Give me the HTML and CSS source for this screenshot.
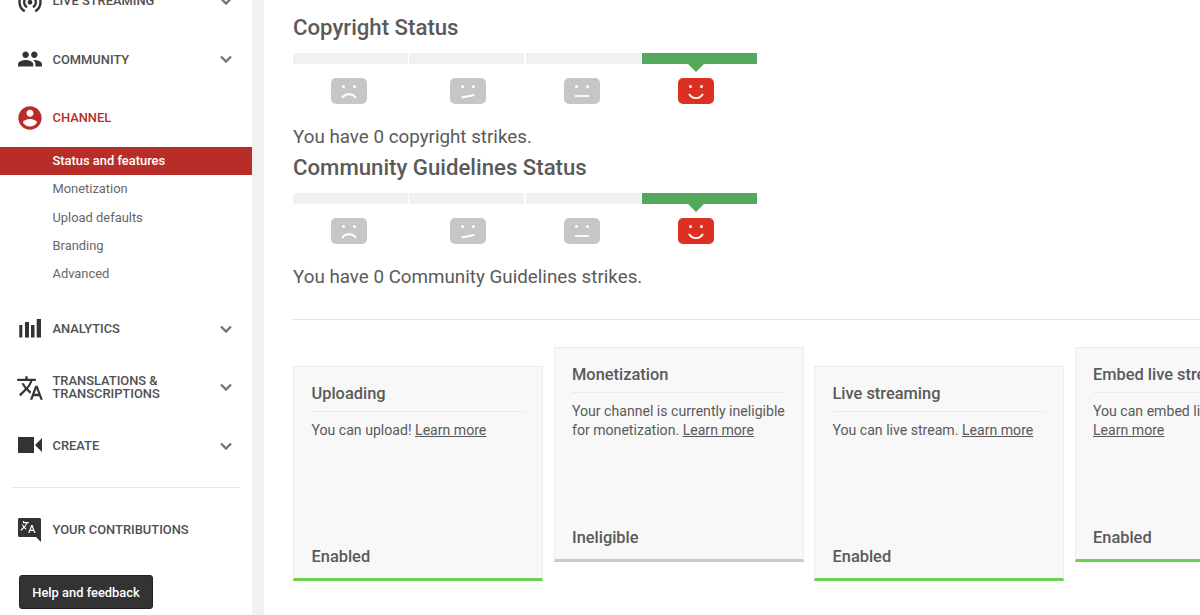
FILE: index.html
```html
<!DOCTYPE html>
<html lang="en">
<head>
    <meta charset="UTF-8">
    <title>Status and features</title>
    <link rel="stylesheet" href="styles.css">
</head>
<body>
    <div class="sidebar">
        <div class="nav-row">
            <svg class="nav-icon" viewBox="0 0 24 24"><path d="M12 11c-1.1 0-2 .9-2 2s.9 2 2 2 2-.9 2-2-.9-2-2-2zm6 2c0-3.31-2.69-6-6-6s-6 2.69-6 6c0 2.22 1.21 4.15 3 5.19l1-1.74c-1.19-.7-2-1.97-2-3.45 0-2.21 1.79-4 4-4s4 1.79 4 4c0 1.48-.81 2.75-2 3.45l1 1.74c1.79-1.04 3-2.97 3-5.19zM12 3C6.48 3 2 7.48 2 13c0 3.7 2.01 6.92 4.99 8.65l1-1.73C5.61 18.53 4 15.96 4 13c0-4.42 3.58-8 8-8s8 3.58 8 8c0 2.96-1.61 5.53-4 6.92l1 1.73c2.99-1.73 5-4.95 5-8.65 0-5.52-4.48-10-10-10z"/></svg>
            <span class="nav-label">LIVE STREAMING</span>
            <svg class="chevron" viewBox="0 0 12 8"><path d="M1 1.5l5 5 5-5"/></svg>
        </div>
        <div class="nav-row">
            <svg class="nav-icon people" viewBox="0 0 24 24"><path d="M16 11c1.66 0 2.99-1.34 2.99-3S17.66 5 16 5c-1.66 0-3 1.34-3 3s1.34 3 3 3zm-8 0c1.66 0 2.99-1.34 2.99-3S9.66 5 8 5C6.34 5 5 6.34 5 8s1.34 3 3 3zm0 2c-2.33 0-7 1.17-7 3.5V19h14v-2.5c0-2.33-4.67-3.5-7-3.5zm8 0c-.29 0-.62.02-.97.05 1.16.84 1.97 1.97 1.97 3.45V19h6v-2.5c0-2.33-4.67-3.5-7-3.5z"/></svg>
            <span class="nav-label">COMMUNITY</span>
            <svg class="chevron" viewBox="0 0 12 8"><path d="M1 1.5l5 5 5-5"/></svg>
        </div>
        <div class="nav-row active">
            <svg class="nav-icon" viewBox="0 0 24 24"><path d="M12 2C6.48 2 2 6.48 2 12s4.48 10 10 10 10-4.48 10-10S17.52 2 12 2zm0 3c1.66 0 3 1.34 3 3s-1.34 3-3 3-3-1.34-3-3 1.34-3 3-3zm0 14.2c-2.5 0-4.71-1.28-6-3.22.03-1.99 4-3.08 6-3.08 1.99 0 5.97 1.09 6 3.08-1.29 1.94-3.5 3.22-6 3.22z"/></svg>
            <span class="nav-label">CHANNEL</span>
        </div>
        <ul class="subnav">
            <li class="current">Status and features</li>
            <li>Monetization</li>
            <li>Upload defaults</li>
            <li>Branding</li>
            <li>Advanced</li>
        </ul>
        <div class="nav-row analytics">
            <svg class="nav-icon" viewBox="0 0 28 28"><path d="M3.3 10h3v12.5h-3zM9 7h4v15.5H9zM15 10h3.5v12.5H15zM20.7 4H25v18.5h-4.3z"/></svg>
            <span class="nav-label">ANALYTICS</span>
            <svg class="chevron" viewBox="0 0 12 8"><path d="M1 1.5l5 5 5-5"/></svg>
        </div>
        <div class="nav-row translations">
            <svg class="nav-icon" viewBox="0 0 24 24"><path d="M12.87 15.07l-2.54-2.51.03-.03c1.74-1.94 2.98-4.17 3.71-6.53H17V4h-7V2H8v2H1v1.99h11.17C11.5 7.92 10.44 9.75 9 11.35 8.07 10.32 7.3 9.19 6.69 8h-2c.73 1.63 1.73 3.17 2.98 4.56l-5.09 5.02L4 19l5-5 3.11 3.11.76-2.04zM18.5 10h-2L12 22h2l1.12-3h4.75L21 22h2l-4.5-12zm-2.62 7l1.62-4.33L19.12 17h-3.24z"/></svg>
            <span class="nav-label">TRANSLATIONS &amp;<br>TRANSCRIPTIONS</span>
            <svg class="chevron" viewBox="0 0 12 8"><path d="M1 1.5l5 5 5-5"/></svg>
        </div>
        <div class="nav-row">
            <svg class="nav-icon" viewBox="0 0 28 28"><path d="M2 5h16v16H2zM19 13l7-7v14z"/></svg>
            <span class="nav-label">CREATE</span>
            <svg class="chevron" viewBox="0 0 12 8"><path d="M1 1.5l5 5 5-5"/></svg>
        </div>
        <div class="nav-divider"></div>
        <div class="nav-row">
            <svg class="nav-icon" viewBox="0 0 28 28"><path fill-rule="evenodd" d="M3.5 2h20c.8 0 1.5.7 1.5 1.5V26l-5-5H3.5C2.7 21 2 20.3 2 19.5v-16C2 2.7 2.7 2 3.5 2zM7 6v1.3h3.1c-.4 1.2-1 2.2-1.9 3.1-.5-.6-1-1.2-1.3-1.9H5.6c.4.9 1 1.8 1.7 2.6l-2.8 2.7.9.9 2.7-2.7 1.7 1.7.5-1.2-1.4-1.3c1.1-1.2 1.9-2.5 2.3-3.9h1.5V6H8.2V5H7zm9.5 3h-1.3l-3 8h1.3l.7-2h3.3l.7 2h1.300zm-.6 1.8 1.100 3h-2.200z"/></svg>
            <span class="nav-label">YOUR CONTRIBUTIONS</span>
        </div>
        <button class="help-btn">Help and feedback</button>
    </div>

    <div class="gutter"></div>

    <div class="main">
        <div class="status">
            <h2>Copyright Status</h2>
            <div class="meter">
                <div class="segment"></div>
                <div class="segment"></div>
                <div class="segment"></div>
                <div class="segment good"></div>
            </div>
            <div class="faces">
                <svg class="face" viewBox="0 0 36 26"><rect width="36" height="26" rx="5"/><circle cx="12.5" cy="8.5" r="1.5"/><circle cx="23.5" cy="8.5" r="1.5"/><path d="M11 20c3.5-5 10.5-5 14 0"/></svg>
                <svg class="face" viewBox="0 0 36 26"><rect width="36" height="26" rx="5"/><circle cx="12.5" cy="8.5" r="1.5"/><circle cx="23.5" cy="8.5" r="1.5"/><path d="M11.5 19.5l13-2.5"/></svg>
                <svg class="face" viewBox="0 0 36 26"><rect width="36" height="26" rx="5"/><circle cx="12.5" cy="8.5" r="1.5"/><circle cx="23.5" cy="8.5" r="1.5"/><path d="M11 18h14"/></svg>
                <svg class="face happy" viewBox="0 0 36 26"><rect width="36" height="26" rx="5"/><circle cx="12.5" cy="8.5" r="1.5"/><circle cx="23.5" cy="8.5" r="1.5"/><path d="M11 16c3.5 5.5 10.5 5.5 14 0"/></svg>
            </div>
            <p class="strikes">You have 0 copyright strikes.</p>
        </div>
        <div class="status">
            <h2>Community Guidelines Status</h2>
            <div class="meter">
                <div class="segment"></div>
                <div class="segment"></div>
                <div class="segment"></div>
                <div class="segment good"></div>
            </div>
            <div class="faces">
                <svg class="face" viewBox="0 0 36 26"><rect width="36" height="26" rx="5"/><circle cx="12.5" cy="8.5" r="1.5"/><circle cx="23.5" cy="8.5" r="1.5"/><path d="M11 20c3.5-5 10.5-5 14 0"/></svg>
                <svg class="face" viewBox="0 0 36 26"><rect width="36" height="26" rx="5"/><circle cx="12.5" cy="8.5" r="1.5"/><circle cx="23.5" cy="8.5" r="1.5"/><path d="M11.5 19.5l13-2.5"/></svg>
                <svg class="face" viewBox="0 0 36 26"><rect width="36" height="26" rx="5"/><circle cx="12.5" cy="8.5" r="1.5"/><circle cx="23.5" cy="8.5" r="1.5"/><path d="M11 18h14"/></svg>
                <svg class="face happy" viewBox="0 0 36 26"><rect width="36" height="26" rx="5"/><circle cx="12.5" cy="8.5" r="1.5"/><circle cx="23.5" cy="8.5" r="1.5"/><path d="M11 16c3.5 5.5 10.5 5.5 14 0"/></svg>
            </div>
            <p class="strikes">You have 0 Community Guidelines strikes.</p>
        </div>

        <div class="main-divider"></div>

        <div class="cards">
            <div class="card enabled">
                <h3>Uploading</h3>
                <p>You can upload! <a href="#">Learn more</a></p>
                <div class="card-state">Enabled</div>
            </div>
            <div class="card raised">
                <h3>Monetization</h3>
                <p>Your channel is currently ineligible for monetization. <a href="#">Learn more</a></p>
                <div class="card-state">Ineligible</div>
            </div>
            <div class="card enabled">
                <h3>Live streaming</h3>
                <p>You can live stream. <a href="#">Learn more</a></p>
                <div class="card-state">Enabled</div>
            </div>
            <div class="card raised enabled">
                <h3>Embed live streams</h3>
                <p>You can embed live streams. <a href="#">Learn more</a></p>
                <div class="card-state">Enabled</div>
            </div>
        </div>
    </div>
</body>
</html>
```

FILE: styles.css
```css
html, body {
    height: 100%;
}
body {
    font-family: Roboto, "Liberation Sans", sans-serif;
    display: flex;
    margin: 0;
    overflow: hidden;
    background-color: #fff;
    color: #5a5a5a;
}

/* Sidebar */
.sidebar {
    width: 252px;
    flex-shrink: 0;
    margin-top: -28.5px;
}
.nav-row {
    display: flex;
    align-items: center;
    height: 58.5px;
    padding: 0 18px 0 16px;
    color: #505050;
}
.nav-icon {
    width: 28px;
    height: 28px;
    flex-shrink: 0;
    fill: #333;
}
.people {
    transform: scale(0.93);
}
.nav-label {
    margin-left: 8.5px;
    flex: 1;
    font-size: 12.9px;
    font-weight: 500;
    line-height: 13.5px;
}
.translations .nav-label,
.translations .chevron {
    margin-bottom: 1px;
}
.chevron {
    width: 12px;
    height: 8px;
    margin-right: 2px;
    fill: none;
    stroke: #757575;
    stroke-width: 2.4;
}
.active .nav-label {
    color: #b92d28;
}
.active .nav-icon {
    fill: #b92d28;
}
.subnav {
    list-style: none;
    margin: 0;
    padding: 0;
}
.subnav li {
    height: 28.25px;
    line-height: 28.5px;
    padding-left: 52.5px;
    font-size: 12.9px;
    color: #666;
}
.subnav .current {
    background-color: #b92d28;
    color: #fff;
    font-weight: 500;
}
.analytics {
    margin-top: 11.5px;
}
.nav-divider {
    height: 1px;
    margin: 12px;
    background-color: #e6e6e6;
}
.help-btn {
    display: block;
    width: 134px;
    height: 34px;
    margin: 16.5px 0 0 19px;
    padding: 0;
    font-family: inherit;
    font-size: 12.9px;
    font-weight: 500;
    color: #fff;
    background-color: #333;
    border: 1px solid #222;
    border-radius: 3px;
}

.gutter {
    width: 12px;
    flex-shrink: 0;
    background-color: #f1f1f1;
}

/* Main content */
.main {
    flex: 1;
    min-width: 0;
    padding: 12px 0 0 29px;
    overflow: hidden;
}
.status {
    width: 464px;
    margin-bottom: 1px;
}
h2 {
    margin: 0;
    font-size: 22.2px;
    font-weight: 500;
    line-height: 30px;
    white-space: nowrap;
}
.meter {
    display: grid;
    grid-template-columns: repeat(4, 1fr);
    gap: 1.5px;
    margin-top: 11px;
}
.segment {
    position: relative;
    height: 11px;
    background-color: #f1f1f1;
}
.good {
    background-color: #53a85a;
}
.good::after {
    content: "";
    position: absolute;
    top: 11px;
    left: 46px;
    border-left: 8px solid transparent;
    border-right: 8px solid transparent;
    border-top: 8px solid #53a85a;
}
.faces {
    display: grid;
    grid-template-columns: 118.5px 114.5px 113.5px 36px;
    padding-left: 38px;
    margin-top: 14px;
}
.face {
    display: block;
    width: 36px;
    height: 26px;
    fill: #fff;
}
.face rect {
    fill: #c6c6c6;
}
.face path {
    fill: none;
    stroke: #fff;
    stroke-width: 1.8;
}
.happy rect {
    fill: #dc3023;
}
.strikes {
    margin: 19px 0 0;
    font-size: 18.8px;
    line-height: 28px;
    white-space: nowrap;
}
.main-divider {
    height: 1px;
    margin-top: 27.5px;
    background-color: #e2e2e2;
}
.cards {
    display: flex;
    gap: 10.5px;
    margin-top: 27px;
}
.card {
    display: flex;
    flex-direction: column;
    width: 250px;
    height: 215px;
    flex-shrink: 0;
    margin-top: 19px;
    padding: 17px 17.5px 11px;
    box-sizing: border-box;
    background-color: #f8f8f8;
    border: 1px solid #ececec;
    border-bottom: 3px solid #c9c9c9;
}
.raised {
    margin-top: 0;
}
.enabled {
    border-bottom-color: #6fcf4f;
}
.card h3 {
    margin: 0;
    padding-bottom: 7px;
    border-bottom: 1px solid #ebebeb;
    font-size: 16.4px;
    font-weight: 500;
    line-height: 20px;
    white-space: nowrap;
}
.card p {
    margin: 9px 0 0;
    font-size: 14.1px;
    line-height: 19px;
}
.card a {
    color: #5a5a5a;
}
.card-state {
    margin-top: auto;
    font-size: 16.4px;
    font-weight: 500;
    line-height: 20px;
}
```
